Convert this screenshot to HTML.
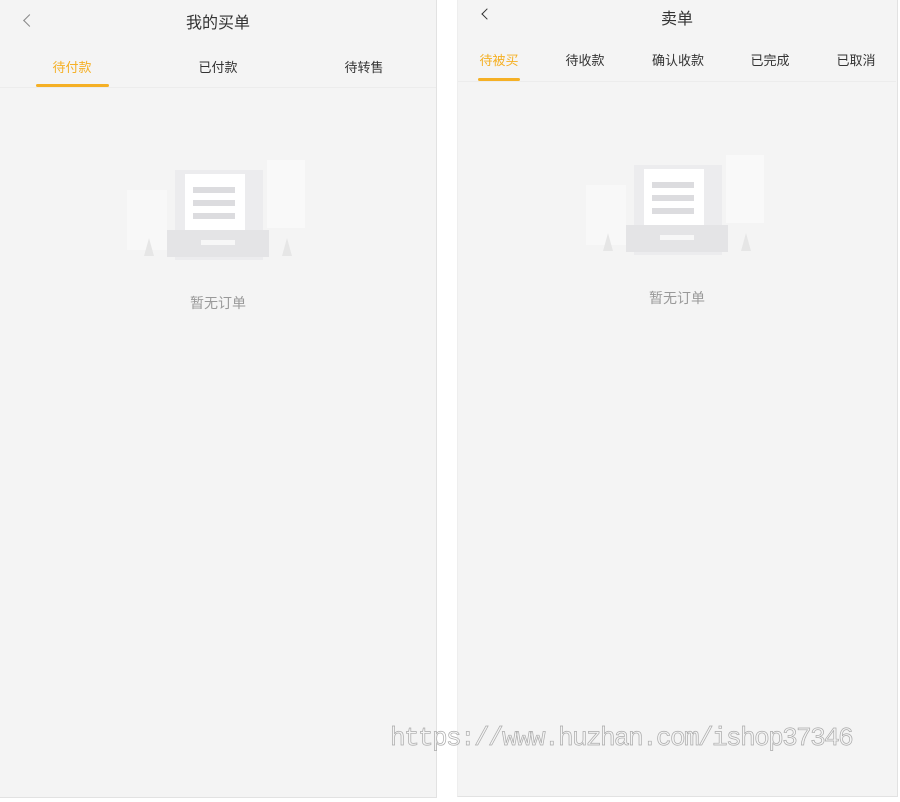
<!DOCTYPE html><html><head><meta charset="utf-8"><style>
body{margin:0;width:900px;height:802px;background:#fff;position:relative;overflow:hidden;font-family:"Liberation Sans","Noto Sans CJK SC",sans-serif}
.p{position:absolute;background:#f4f4f4}
.t{position:absolute;white-space:nowrap;transform:translateX(-50%)}
.ill{position:absolute;width:180px;height:130px}
</style></head><body>
<div class="p" style="left:0;top:0;width:436px;height:797px;border-right:1px solid #e2e2e2;border-bottom:1px solid #e2e2e2"></div>
<div class="p" style="left:457px;top:0;width:439px;height:796px;border-right:1px solid #e2e2e2;border-bottom:1px solid #e2e2e2;border-left:1px solid #eee"></div>
<!-- left -->
<div style="position:absolute;left:25px;top:16px;width:8px;height:8px;border-left:1.5px solid #888;border-bottom:1.5px solid #888;transform:rotate(45deg)"></div>
<div class="t" style="left:218px;top:9px;font-size:16px;color:#333">我的买单</div>
<div class="t" style="left:72px;top:57px;font-size:13px;color:#f5b025">待付款</div>
<div class="t" style="left:218px;top:57px;font-size:13px;color:#333">已付款</div>
<div class="t" style="left:364px;top:57px;font-size:13px;color:#333">待转售</div>
<div style="position:absolute;left:36px;top:84px;width:73px;height:3px;border-radius:2px;background:#f5b025"></div>
<div style="position:absolute;left:0;top:87px;width:436px;height:1px;background:#ececec"></div>
<svg class="ill" style="left:125px;top:140px" viewBox="0 0 180 130">
<rect x="2" y="50" width="40" height="60" fill="#f8f8f8"/><rect x="142" y="20" width="38" height="68" fill="#f9f9f9"/>
<rect x="50" y="30" width="88" height="90" fill="#ececee"/><rect x="60" y="34" width="60" height="80" fill="#fff"/>
<rect x="68" y="47" width="42" height="6" fill="#dcdcdf"/><rect x="68" y="60" width="42" height="6" fill="#dcdcdf"/><rect x="68" y="73" width="42" height="6" fill="#dcdcdf"/>
<rect x="42" y="90" width="102" height="27" fill="#e4e4e6"/><rect x="76" y="100" width="34" height="5" fill="#f7f7f7"/>
<path d="M24 98l5 18h-10z" fill="#e6e6e6"/><path d="M162 98l5 18h-10z" fill="#e6e6e6"/></svg>
<div class="t" style="left:218px;top:293px;font-size:14px;color:#999">暂无订单</div>
<!-- right -->
<div style="position:absolute;left:483px;top:10px;width:7px;height:7px;border-left:1.5px solid #333;border-bottom:1.5px solid #333;transform:rotate(45deg)"></div>
<div class="t" style="left:677px;top:5px;font-size:16px;color:#333">卖单</div>
<div class="t" style="left:499px;top:50px;font-size:13px;color:#f5b025">待被买</div>
<div class="t" style="left:585px;top:50px;font-size:13px;color:#333">待收款</div>
<div class="t" style="left:678px;top:50px;font-size:13px;color:#333">确认收款</div>
<div class="t" style="left:770px;top:50px;font-size:13px;color:#333">已完成</div>
<div class="t" style="left:856px;top:50px;font-size:13px;color:#333">已取消</div>
<div style="position:absolute;left:478px;top:78px;width:42px;height:3px;border-radius:2px;background:#f5b025"></div>
<div style="position:absolute;left:458px;top:81px;width:438px;height:1px;background:#ececec"></div>
<svg class="ill" style="left:584px;top:135px" viewBox="0 0 180 130">
<rect x="2" y="50" width="40" height="60" fill="#f8f8f8"/><rect x="142" y="20" width="38" height="68" fill="#f9f9f9"/>
<rect x="50" y="30" width="88" height="90" fill="#ececee"/><rect x="60" y="34" width="60" height="80" fill="#fff"/>
<rect x="68" y="47" width="42" height="6" fill="#dcdcdf"/><rect x="68" y="60" width="42" height="6" fill="#dcdcdf"/><rect x="68" y="73" width="42" height="6" fill="#dcdcdf"/>
<rect x="42" y="90" width="102" height="27" fill="#e4e4e6"/><rect x="76" y="100" width="34" height="5" fill="#f7f7f7"/>
<path d="M24 98l5 18h-10z" fill="#e6e6e6"/><path d="M162 98l5 18h-10z" fill="#e6e6e6"/></svg>
<div class="t" style="left:677px;top:288px;font-size:14px;color:#999">暂无订单</div>
<div style="position:absolute;left:390px;top:723px;font-family:'Liberation Mono',monospace;font-size:26px;color:transparent;-webkit-text-stroke:0.7px #aaa;letter-spacing:-1.6px;white-space:nowrap">https://www.huzhan.com/ishop37346</div>
</body></html>
